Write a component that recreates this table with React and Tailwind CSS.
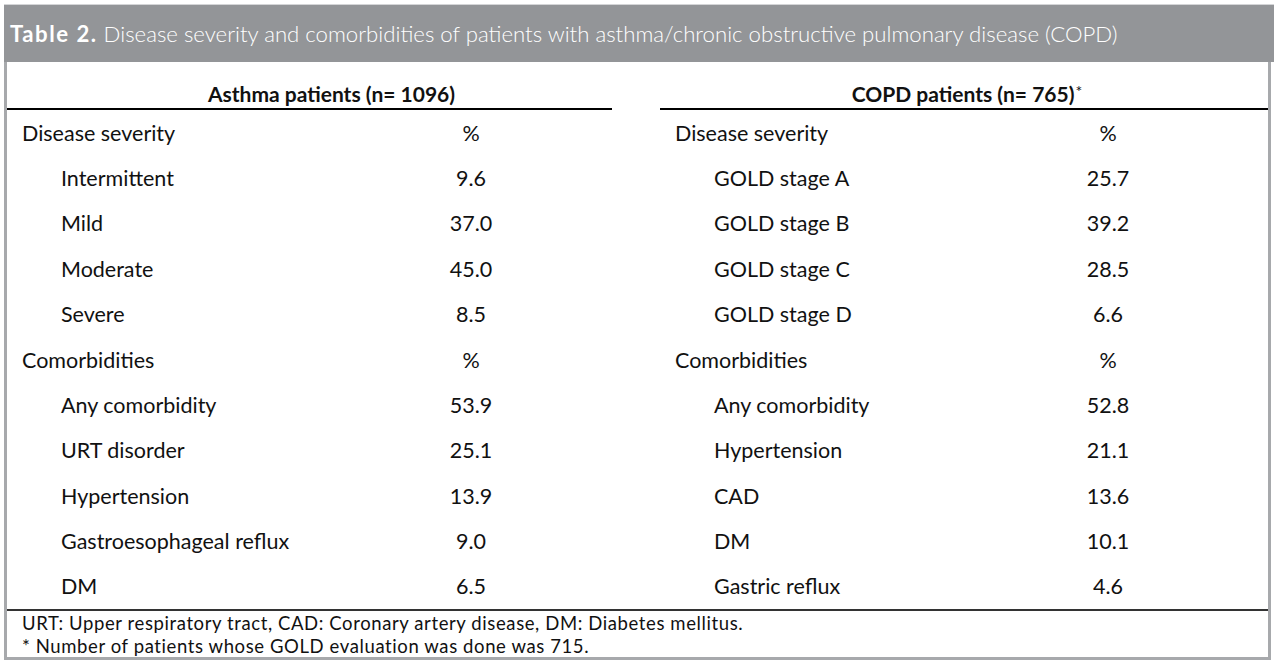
const asthma = [
  { label: "Disease severity", value: "%", head: true },
  { label: "Intermittent", value: "9.6" },
  { label: "Mild", value: "37.0" },
  { label: "Moderate", value: "45.0" },
  { label: "Severe", value: "8.5" },
  { label: "Comorbidities", value: "%", head: true },
  { label: "Any comorbidity", value: "53.9" },
  { label: "URT disorder", value: "25.1" },
  { label: "Hypertension", value: "13.9" },
  { label: "Gastroesophageal reflux", value: "9.0" },
  { label: "DM", value: "6.5" },
];

const copd = [
  { label: "Disease severity", value: "%", head: true },
  { label: "GOLD stage A", value: "25.7" },
  { label: "GOLD stage B", value: "39.2" },
  { label: "GOLD stage C", value: "28.5" },
  { label: "GOLD stage D", value: "6.6" },
  { label: "Comorbidities", value: "%", head: true },
  { label: "Any comorbidity", value: "52.8" },
  { label: "Hypertension", value: "21.1" },
  { label: "CAD", value: "13.6" },
  { label: "DM", value: "10.1" },
  { label: "Gastric reflux", value: "4.6" },
];

function Rows({ rows, labelW }) {
  return (
    <div className="flex flex-col">
      {rows.map((r, i) => (
        <div key={i} className="flex items-center h-[45.4px]">
          <div className={`${labelW} ${r.head ? "pl-[15px]" : "pl-[54px]"}`}>{r.label}</div>
          <div className="w-[100px] text-center">{r.value}</div>
        </div>
      ))}
    </div>
  );
}

export default function App() {
  return (
    <div className="w-[1275px] h-[669px] bg-white pt-[4px] pl-[4px] text-[#111] font-['Lato','Open_Sans',sans-serif]">
      <div className="w-[1270px] border-t border-[#d4d5d7]">
        <div className="h-[57px] bg-[#939598] text-white text-[22.2px] flex items-center pl-[6px] font-light">
          <span className="font-bold tracking-[1.5px] mr-[6px]">Table 2.</span>
          Disease severity and comorbidities of patients with asthma/chronic obstructive pulmonary disease (COPD)
        </div>
      </div>
      <div className="w-[1267px] border-x-[3px] border-b-[3px] border-[#a7a9ac]">
        <div className="flex">
          <div className="w-[605px]">
            <div className="h-[48px] flex items-end justify-center pb-[2px] pl-[44px] border-b-2 border-black text-[21px] leading-[24px] font-bold">
              Asthma patients (n= 1096)
            </div>
          </div>
          <div className="w-[48px]" />
          <div className="flex-1">
            <div className="h-[48px] flex items-end justify-center pb-[2px] pl-[6px] border-b-2 border-black text-[21px] leading-[24px] font-bold">
              COPD patients (n= 765)<span className="relative -top-[7px] ml-[1px] text-[16px] leading-[16px] font-normal">*</span>
            </div>
          </div>
        </div>
        <div className="flex text-[21.5px] border-b-2 border-[#333]">
          <div className="w-[605px]">
            <Rows rows={asthma} labelW="w-[414px]" />
          </div>
          <div className="w-[48px]" />
          <div className="flex-1">
            <Rows rows={copd} labelW="w-[398px]" />
          </div>
        </div>
        <div className="px-[15px] pt-[1px] text-[18.5px] leading-[22.5px] tracking-[0.6px]">
          <div>URT: Upper respiratory tract, CAD: Coronary artery disease, DM: Diabetes mellitus.</div>
          <div>* Number of patients whose GOLD evaluation was done was 715.</div>
        </div>
      </div>
    </div>
  );
}
